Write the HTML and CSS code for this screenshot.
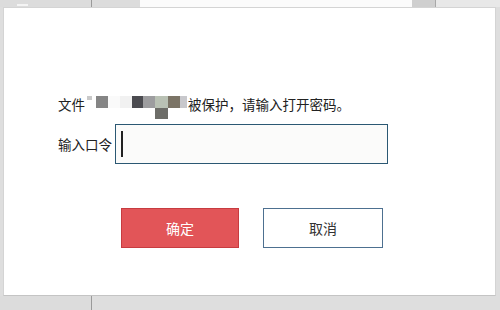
FILE: index.html
```html
<!DOCTYPE html>
<html lang="zh-CN">
  <head>
    <meta charset="UTF-8" />
    <meta name="viewport" content="width=device-width, initial-scale=1.0" />
    <title>密码</title>
    <link rel="stylesheet" href="styles.css">
  </head>
  <body>
    <!-- 背景上沿 -->
    <div class="strip strip-top">
      <div class="cell cell-a"><span class="dash"></span></div>
      <div class="cell cell-b"></div>
      <div class="cell cell-c"></div>
      <div class="cell cell-d"></div>
      <div class="cell cell-e"></div>
    </div>

    <div class="dialog">
      <p class="message">
        文件<span class="mosaic">
          <span class="px px1"></span>
          <span class="px px2"></span>
          <span class="px px3"></span>
          <span class="px px4"></span>
          <span class="px px5"></span>
          <span class="px px6"></span>
          <span class="px px7"></span>
          <span class="px px8"></span>
          <span class="px px9"></span>
        </span>被保护，请输入打开密码。
      </p>

      <div class="form-row">
        <label class="label">输入口令</label>
        <div class="input"><span class="caret"></span></div>
      </div>

      <div class="buttons">
        <button class="button button-ok">确定</button>
        <button class="button button-cancel">取消</button>
      </div>
    </div>

    <!-- 背景下沿 -->
    <div class="strip strip-bottom">
      <div class="cell cell-a"></div>
      <div class="cell cell-rest"></div>
    </div>
  </body>
</html>
```

FILE: styles.css
```css
:root {
  --bg: #dedede;
  --red: #e25558;
  --red-dark: #c73c40;
  --blue: #4d7090;
  --teal: #2b5873;
}

body {
  margin: 0;
  width: 500px;
  height: 310px;
  overflow: hidden;
  background: var(--bg);
  font-family: "Noto Sans CJK SC", "Noto Sans", sans-serif;
  color: #222;
  display: flex;
  flex-direction: column;
}

.strip {
  display: flex;
}
.strip-top {
  height: 7px;
}
.strip-bottom {
  flex: 1;
}

.cell {
  height: 100%;
  background: #dcdcdc;
}
.cell-a {
  width: 91px;
  border-right: 1px solid #9a9a9a;
  position: relative;
}
.cell-b { width: 48px; }
.cell-c { width: 272px; background: #fbfbfb; }
.cell-d { width: 23px; background: #cfcfcf; border-right: 1px solid #a8a8a8; }
.cell-e { flex: 1; background: #e8e8e8; }
.cell-rest { flex: 1; background: #dedede; }

.dash {
  position: absolute;
  left: 17px;
  top: 4px;
  width: 11px;
  height: 2px;
  background: #f4f4f4;
}

.dialog {
  margin: 0 4px 0 3px;
  height: 289px;
  box-sizing: border-box;
  background: #fff;
  border: 1px solid #d4d4d4;
  border-bottom: 1px solid #c4c4c4;
  padding: 86px 0 0 54px;
}

.message {
  margin: 0;
  font-size: 13.5px;
  line-height: 20px;
  display: flex;
  align-items: center;
  white-space: nowrap;
}

.mosaic {
  display: inline-flex;
  align-items: flex-start;
  height: 20px;
  margin: 0 1px 0 2px;
  padding-top: 2px;
  box-sizing: border-box;
  filter: blur(0.6px);
}
.px {
  display: inline-block;
  height: 12px;
}
.px1 { width: 5px; height: 4px; background: #c9c9c9; margin-right: 4px; }
.px2 { width: 12px; background: #858585; }
.px3 { width: 12px; background: #fafafa; }
.px4 { width: 12px; background: #f1f1f1; }
.px5 { width: 11px; background: #4b4b50; }
.px6 { width: 12px; background: #9d9d9f; }
.px7 { width: 13px; background: #b9c1b4; box-shadow: 0 11px 0 #6d6d68; }
.px8 { width: 12px; background: #7b7466; }
.px9 { width: 7px; background: #c8c8cc; }

.form-row {
  display: flex;
  align-items: center;
  gap: 3px;
  margin-top: 10px;
}

.label {
  font-size: 13.5px;
  width: 54px;
  white-space: nowrap;
}

.input {
  width: 273px;
  height: 40px;
  box-sizing: border-box;
  border: 1.5px solid var(--teal);
  background: #fbfbfa;
  display: flex;
  align-items: center;
  padding-left: 5px;
}
.caret {
  width: 1.5px;
  height: 26px;
  background: #222;
}

.buttons {
  display: flex;
  gap: 24px;
  margin: 44px 0 0 63px;
}

.button {
  height: 40px;
  box-sizing: border-box;
  font-family: inherit;
  font-size: 14px;
  cursor: pointer;
  padding: 0;
}
.button-ok {
  width: 118px;
  background: var(--red);
  border: 1px solid var(--red-dark);
  color: #fff;
}
.button-cancel {
  width: 120px;
  background: #fff;
  border: 1.5px solid var(--blue);
  color: #333;
}
```
